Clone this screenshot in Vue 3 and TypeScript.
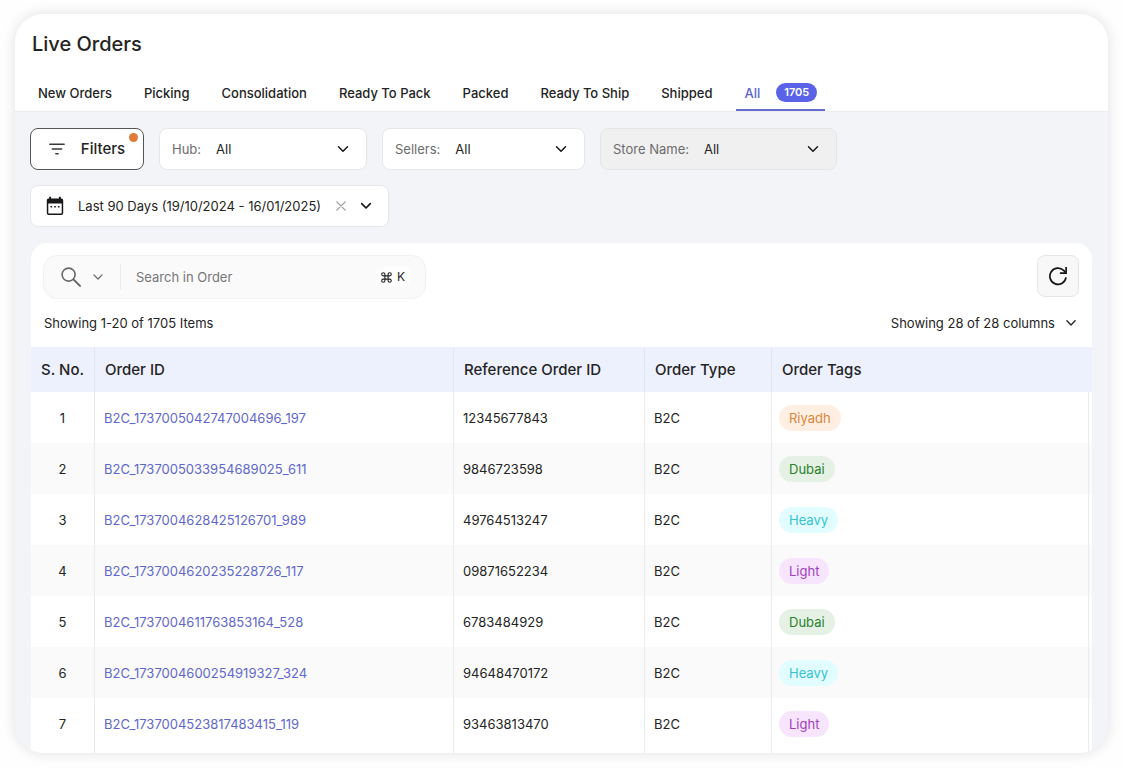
<script setup lang="ts">
import { ref } from 'vue'

interface Tab {
  label: string
  count?: number
}

interface Order {
  id: string
  reference: string
  type: string
  tag: 'Riyadh' | 'Dubai' | 'Heavy' | 'Light'
}

const tabs: Tab[] = [
  { label: 'New Orders' },
  { label: 'Picking' },
  { label: 'Consolidation' },
  { label: 'Ready To Pack' },
  { label: 'Packed' },
  { label: 'Ready To Ship' },
  { label: 'Shipped' },
  { label: 'All', count: 1705 },
]
const activeTab = ref('All')

const selects = [
  { key: 'hub', label: 'Hub:', disabled: false },
  { key: 'sellers', label: 'Sellers:', disabled: false },
  { key: 'store', label: 'Store Name:', disabled: true },
]

const search = ref('')
const dateRange = ref('Last 90 Days (19/10/2024 - 16/01/2025)')

const orders: Order[] = [
  { id: 'B2C_1737005042747004696_197', reference: '12345677843', type: 'B2C', tag: 'Riyadh' },
  { id: 'B2C_1737005033954689025_611', reference: '9846723598', type: 'B2C', tag: 'Dubai' },
  { id: 'B2C_1737004628425126701_989', reference: '49764513247', type: 'B2C', tag: 'Heavy' },
  { id: 'B2C_1737004620235228726_117', reference: '09871652234', type: 'B2C', tag: 'Light' },
  { id: 'B2C_1737004611763853164_528', reference: '6783484929', type: 'B2C', tag: 'Dubai' },
  { id: 'B2C_1737004600254919327_324', reference: '94648470172', type: 'B2C', tag: 'Heavy' },
  { id: 'B2C_1737004523817483415_119', reference: '93463813470', type: 'B2C', tag: 'Light' },
]
</script>

<template>
  <div class="page">
    <main class="window">
      <header class="top">
        <h1>Live Orders</h1>
        <nav class="tabs" role="tablist" aria-label="Order status">
          <button
            v-for="tab in tabs"
            :key="tab.label"
            type="button"
            role="tab"
            class="tab"
            :class="{ active: activeTab === tab.label }"
            :aria-selected="activeTab === tab.label"
            @click="activeTab = tab.label"
          >
            {{ tab.label }}
            <span v-if="tab.count" class="count">{{ tab.count }}</span>
          </button>
        </nav>
      </header>

      <section class="filters">
        <button type="button" class="filter-button">
          <svg width="16" height="12" viewBox="0 0 16 12" fill="none" stroke="#3a3a3a" stroke-width="1.4" stroke-linecap="round">
            <path d="M0.8 1.2H15.2M3.3 6H12.7M6.8 10.8H9.2" />
          </svg>
          Filters
          <span class="dot"></span>
        </button>
        <div v-for="s in selects" :key="s.key" class="field" :class="[s.key, { muted: s.disabled }]">
          <label :for="s.key">{{ s.label }}</label>
          <select :id="s.key">
            <option>All</option>
          </select>
          <svg class="chevron" width="12" height="8" viewBox="0 0 12 8" fill="none" stroke="#181818" stroke-width="1.5" stroke-linecap="round" stroke-linejoin="round">
            <path d="M1.5 1.7L6 6.2L10.5 1.7" />
          </svg>
        </div>
        <div class="date">
          <svg width="18" height="20" viewBox="0 0 18 20">
            <path fill="#181818" d="M3.2 0.8h1.9v1.7h7.8V0.8h1.9v1.7h0.7a1.7 1.7 0 0 1 1.7 1.7v13a1.8 1.8 0 0 1-1.8 1.8H2.6a1.8 1.8 0 0 1-1.8-1.8v-13a1.7 1.7 0 0 1 1.7-1.7h0.7zM2.3 7.6v9.3a.6.6 0 0 0 .6.6h12.2a.6.6 0 0 0 .6-.6V7.6z" fill-rule="evenodd" />
            <path fill="#181818" d="M4.5 10h1.6v1.6H4.5zM8.2 10h1.6v1.6H8.2zM11.9 10h1.6v1.6H11.9z" />
          </svg>
          <button type="button" class="range">{{ dateRange }}</button>
          <button type="button" class="icon-button" aria-label="Clear date range">
            <svg width="10" height="10" viewBox="0 0 10 10" stroke="#999" stroke-width="1.2" stroke-linecap="round">
              <path d="M0.8 0.8L9.2 9.2M9.2 0.8L0.8 9.2" />
            </svg>
          </button>
          <button type="button" class="icon-button" aria-label="Choose date range">
            <svg width="12" height="8" viewBox="0 0 12 8" fill="none" stroke="#181818" stroke-width="1.7" stroke-linecap="round" stroke-linejoin="round">
              <path d="M1.7 1.7L6 6L10.3 1.7" />
            </svg>
          </button>
        </div>
      </section>

      <section class="panel">
        <div class="toolbar">
          <div class="search">
            <svg width="20" height="20" viewBox="0 0 20 20" fill="none" stroke="#666" stroke-width="1.6" stroke-linecap="round">
              <circle cx="7.6" cy="7.6" r="6.5" />
              <path d="M12.4 12.4L19 18.9" stroke-width="2" />
            </svg>
            <button type="button" class="icon-button scope" aria-label="Search scope">
              <svg width="10" height="6" viewBox="0 0 10 6" fill="none" stroke="#666" stroke-width="1.2" stroke-linecap="round" stroke-linejoin="round">
                <path d="M0.9 0.9L5 5L9.1 0.9" />
              </svg>
            </button>
            <input v-model="search" type="text" placeholder="Search in Order" aria-label="Search in Order" />
            <kbd>
              <svg width="11" height="11" viewBox="0 0 11 11" fill="none" stroke="#222" stroke-width="1.1">
                <path d="M3.9 3.9V2.3A1.6 1.6 0 1 0 2.3 3.9H8.7A1.6 1.6 0 1 0 7.1 2.3V8.7A1.6 1.6 0 1 0 8.7 7.1H2.3A1.6 1.6 0 1 0 3.9 8.7Z" />
              </svg>
              K
            </kbd>
          </div>
          <button type="button" class="refresh" aria-label="Refresh">
            <svg width="20" height="20" viewBox="0 0 20 20" fill="none" stroke="#181818" stroke-width="1.7">
              <path d="M18 11.4A8.1 8.1 0 1 1 15.6 4.4L17.8 6.6" />
              <path d="M18.1 1V7.2H11.9" />
            </svg>
          </button>
        </div>
        <div class="summary">
          <span>Showing 1-20 of 1705 Items</span>
          <button type="button" class="columns">
            Showing 28 of 28 columns
            <svg width="10" height="6" viewBox="0 0 10 6" fill="none" stroke="#222" stroke-width="1.3" stroke-linecap="round" stroke-linejoin="round">
              <path d="M0.9 0.8L5 5L9.1 0.8" />
            </svg>
          </button>
        </div>
        <table>
          <colgroup>
            <col class="c-number" />
            <col class="c-id" />
            <col class="c-reference" />
            <col class="c-type" />
            <col />
          </colgroup>
          <thead>
            <tr>
              <th scope="col">S. No.</th>
              <th scope="col">Order ID</th>
              <th scope="col">Reference Order ID</th>
              <th scope="col">Order Type</th>
              <th scope="col">Order Tags</th>
            </tr>
          </thead>
          <tbody>
            <tr v-for="(order, index) in orders" :key="order.id">
              <td>{{ index + 1 }}</td>
              <td><a href="#">{{ order.id }}</a></td>
              <td>{{ order.reference }}</td>
              <td>{{ order.type }}</td>
              <td><span class="tag" :class="order.tag.toLowerCase()">{{ order.tag }}</span></td>
            </tr>
          </tbody>
        </table>
      </section>
    </main>
  </div>
</template>

<style>
body {
  margin: 0;
  background: #fefefe;
}
</style>

<style scoped>
.page {
  box-sizing: border-box;
  min-height: 100vh;
  padding: 14px 15px 15px;
  font-family: Inter, "Noto Sans", sans-serif;
  font-size: 13px;
  line-height: 20px;
  color: #242424;
  display: flex;
}

.window {
  flex: 1;
  min-width: 0;
  display: flex;
  flex-direction: column;
  background: #f2f4f7;
  border-radius: 28px;
  overflow: hidden;
  box-shadow: 0 0 14px rgba(0, 0, 0, 0.12);
}

button,
input,
select {
  font: inherit;
  color: inherit;
  background: none;
  border: 0;
  padding: 0;
  margin: 0;
  outline: none;
}

button {
  cursor: pointer;
}

svg {
  flex: none;
  display: block;
}

.top {
  background: #fff;
  border-bottom: 1px solid #ebecef;
  padding: 16px 17px 0;
}

h1 {
  margin: 0;
  font-size: 20px;
  line-height: 28px;
  font-weight: 500;
}

.tabs {
  display: flex;
  gap: 16px;
  margin-top: 18px;
}

.tab {
  display: flex;
  align-items: center;
  gap: 16px;
  height: 35px;
  padding: 0 8px;
  border-bottom: 2px solid transparent;
  font-weight: 500;
  white-space: nowrap;
}

.tab:first-child {
  padding-left: 6px;
}

.tab.active {
  color: #5b64cf;
  border-color: #656fce;
}

.count {
  background: #5a63e8;
  color: #fff;
  font-size: 11px;
  line-height: 19px;
  font-weight: 600;
  border-radius: 10px;
  padding: 0 8px;
}

.filters {
  display: flex;
  flex-wrap: wrap;
  gap: 15px;
  padding: 16px 15px;
}

.filter-button {
  position: relative;
  box-sizing: border-box;
  display: flex;
  align-items: center;
  justify-content: center;
  gap: 16px;
  width: 114px;
  height: 42px;
  background: #fff;
  border: 1px solid #555;
  border-radius: 8px;
  font-size: 15px;
  font-weight: 500;
}

.dot {
  position: absolute;
  top: 4px;
  right: 5px;
  width: 9px;
  height: 9px;
  border-radius: 50%;
  background: #e07b39;
}

.field,
.date {
  box-sizing: border-box;
  display: flex;
  align-items: center;
  height: 42px;
  background: #fff;
  border: 1px solid #e4e6e8;
  border-radius: 8px;
}

.field {
  gap: 15px;
  padding: 0 17px 0 12px;
}

.field label {
  color: #6c6c6c;
  white-space: nowrap;
}

.field select {
  appearance: none;
  flex: 1;
  min-width: 0;
}

.hub {
  width: 208px;
}

.sellers {
  width: 203px;
}

.store {
  width: 237px;
}

.field.muted {
  background: #f0f0f0;
  border-color: #e4e5e6;
}

.date {
  gap: 14px;
  width: 359px;
  padding: 0 16px 0 15px;
}

.range {
  flex: 1;
  text-align: left;
  white-space: nowrap;
}

.panel {
  flex: 1;
  margin: 0 16px;
  background: #fff;
  border-radius: 16px 16px 0 0;
}

.toolbar {
  display: flex;
  justify-content: space-between;
  padding: 12px 13px 0 12px;
}

.search {
  box-sizing: border-box;
  display: flex;
  align-items: center;
  width: 383px;
  height: 44px;
  padding: 0 15px 0 17px;
  background: #fafafa;
  border: 1px solid #f1f1f1;
  border-radius: 14px;
}

.scope {
  display: flex;
  align-items: center;
  height: 26px;
  padding: 0 17px 0 12px;
  border-right: 1px solid #ebebeb;
}

.search input {
  flex: 1;
  min-width: 0;
  padding-left: 15px;
}

.search input::placeholder {
  color: #777;
  opacity: 1;
}

kbd {
  display: flex;
  align-items: center;
  gap: 5px;
  padding: 0 5px;
  background: #fdfdfd;
  border-radius: 4px;
  font-family: inherit;
  font-size: 12px;
}

.refresh {
  box-sizing: border-box;
  display: flex;
  align-items: center;
  justify-content: center;
  width: 42px;
  height: 42px;
  background: #f8f8f8;
  border: 1px solid #e3e5e6;
  border-radius: 8px;
}

.summary {
  display: flex;
  justify-content: space-between;
  padding: 14px 16px 14px 13px;
}

.columns {
  display: flex;
  align-items: center;
  gap: 11px;
}

table {
  width: 100%;
  table-layout: fixed;
  border-collapse: separate;
  border-spacing: 0;
}

.c-number {
  width: 64px;
}

.c-id {
  width: 359px;
}

.c-reference {
  width: 191px;
}

.c-type {
  width: 127px;
}

th {
  height: 45px;
  padding: 0 10px;
  background: #edf0fd;
  border-right: 1px solid #e2e5f2;
  font-size: 15px;
  font-weight: 500;
  text-align: left;
  white-space: nowrap;
}

td {
  height: 51px;
  padding: 0 9px;
  border-right: 1px solid #eaebec;
}

th:first-child,
td:first-child {
  padding: 0;
  text-align: center;
}

th:last-child,
td:last-child {
  position: relative;
  border-right: 0;
}

td:last-child {
  padding-left: 7px;
}

tbody tr:last-child td {
  padding-bottom: 4px;
}

td:last-child::after {
  content: "";
  position: absolute;
  top: 0;
  bottom: 0;
  right: 3px;
  border-right: 1px solid #eaebec;
}

tbody tr:nth-child(even) {
  background: #fafafa;
}

a {
  color: #5f68cc;
  text-decoration: none;
}

.tag {
  display: inline-block;
  padding: 0 10px;
  line-height: 26px;
  border-radius: 13px;
}

.riyadh {
  color: #d9863d;
  background: #ffefe2;
}

.dubai {
  color: #26802b;
  background: #e6f1e6;
}

.heavy {
  color: #38c3cf;
  background: #e2fdff;
}

.light {
  color: #a03fc4;
  background: #f7e5fd;
}
</style>
